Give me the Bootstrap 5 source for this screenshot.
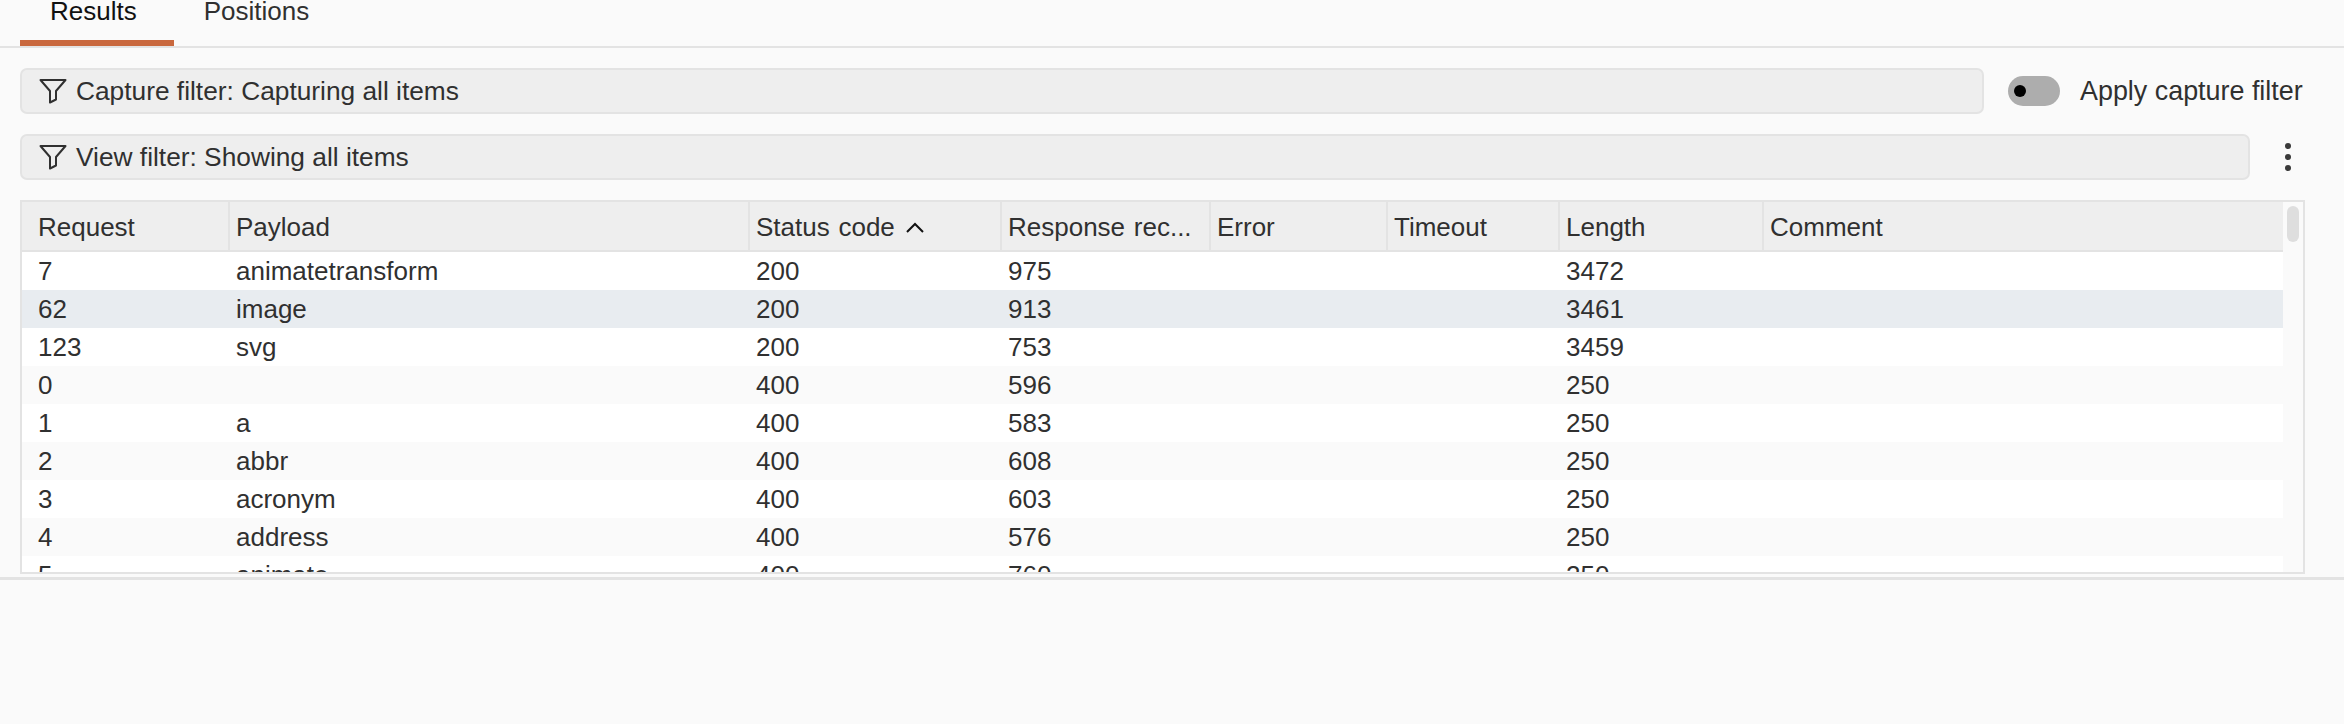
<!DOCTYPE html>
<html lang="en">
<head>
<meta charset="utf-8">
<title>Results</title>
<link href="https://cdn.jsdelivr.net/npm/bootstrap@5.3.0/dist/css/bootstrap.min.css" rel="stylesheet">
<style>
html,body{height:100%;margin:0;overflow:hidden}
body{background:#fafafa;color:#303030;font-family:"Liberation Sans",Arial,sans-serif;font-size:26px;line-height:1.2}
.top-tabs{height:48px;border-bottom:2px solid #e3e3e3;padding-left:20px;flex-wrap:nowrap}
.top-tabs .nav-link{height:46px;padding:0 36px 0 30px;line-height:22px;color:#303030;border-radius:0;border-bottom:6px solid transparent;background:none}
.top-tabs .nav-item:first-child .nav-link{padding-right:37px}
.top-tabs .nav-link.active{color:#111;border-bottom-color:#c9683e}
.panel-main{padding:20px 39px 0 20px;height:529px}
.filter-box{height:46px;background:#eee;border:2px solid #e3e3e3;border-radius:7px;padding-left:17px;gap:9px;line-height:42px;min-width:0;font-size:26.3px}
.filter-icon{width:28px;height:26px;flex:none}
.capture-box{width:1964px}
.view-box{width:2230px}
.toggle-off{width:52px;height:30px;border-radius:15px;background:#adadad;position:relative;flex:none;margin-left:24px}
.toggle-off::before{content:"";position:absolute;left:6px;top:9px;width:12px;height:12px;border-radius:50%;background:#000}
.toggle-label{margin-left:20px;white-space:nowrap;font-size:26.9px}
.kebab{width:6px;margin-left:35px;gap:5px}
.kebab span{width:6px;height:6px;border-radius:50%;background:#3a3a3a}
.mt-filter{margin-top:20px}
.results-frame{height:374px;border:2px solid #e3e3e3;width:2285px}
.results-clip{width:2263px;height:370px;overflow:hidden;background:#fff}
.table.results-table{table-layout:fixed;width:2263px;margin:0;border-collapse:separate;border-spacing:0;color:#303030}
.table.results-table>*>*>*{padding:0 0 0 6px;border:0;box-shadow:none;background:transparent;white-space:nowrap;overflow:hidden;font-weight:400;color:inherit;vertical-align:middle;line-height:30px}
.table.results-table>*>*>:first-child{padding-left:16px}
.results-table thead tr{height:50px}
.table.results-table thead th{background:#eee;border-right:2px solid #e3e3e3;border-bottom:2px solid #e3e3e3;padding-top:2px;word-spacing:1.500px}
.table.results-table thead th:last-child{border-right:0}
.results-table tbody tr{height:38px}
.results-table tbody tr.is-odd{background:#fafafa}
.results-table tbody tr.is-sel{background:#e8ecf0}
.sort-up{width:18px;height:11px;margin-left:11px;vertical-align:3px}
.scroll-track{width:20px;background:#fafafa;padding:4px 4px 0 4px}
.scroll-thumb{width:12px;height:36px;border-radius:6px;background:#dedede}
.lower-pane{border-top:3px solid #e3e3e3;height:147px}
</style>
</head>
<body>
<ul class="nav top-tabs">
  <li class="nav-item"><a class="nav-link active" href="#">Results</a></li>
  <li class="nav-item"><a class="nav-link" href="#">Positions</a></li>
</ul>
<div class="panel-main d-flex flex-column">
  <div class="d-flex align-items-center">
    <div class="filter-box capture-box d-flex align-items-center">
      <svg class="filter-icon" viewBox="0 0 28 26" fill="none" stroke="#303030" stroke-width="2" stroke-linejoin="round"><path d="M1.500 2h25L17 13v8.500L11 24.500V13z"/></svg>
      <span>Capture filter: Capturing all items</span>
    </div>
    <span class="toggle-off"></span>
    <span class="toggle-label">Apply capture filter</span>
  </div>
  <div class="d-flex align-items-center mt-filter">
    <div class="filter-box view-box d-flex align-items-center">
      <svg class="filter-icon" viewBox="0 0 28 26" fill="none" stroke="#303030" stroke-width="2" stroke-linejoin="round"><path d="M1.500 2h25L17 13v8.500L11 24.500V13z"/></svg>
      <span>View filter: Showing all items</span>
    </div>
    <div class="kebab d-flex flex-column"><span></span><span></span><span></span></div>
  </div>
  <div class="results-frame d-flex mt-filter">
    <div class="results-clip">
      <table class="table results-table">
        <colgroup><col style="width:208px"><col style="width:520px"><col style="width:252px"><col style="width:209px"><col style="width:177px"><col style="width:172px"><col style="width:204px"><col></colgroup>
        <thead><tr><th>Request</th><th>Payload</th><th>Status code<svg class="sort-up" viewBox="0 0 18 11" fill="none" stroke="#111" stroke-width="2"><path d="M1 10l8-8 8 8"/></svg></th><th>Response rec...</th><th>Error</th><th>Timeout</th><th>Length</th><th>Comment</th></tr></thead>
        <tbody>
          <tr><td>7</td><td>animatetransform</td><td>200</td><td>975</td><td></td><td></td><td>3472</td><td></td></tr>
          <tr class="is-sel"><td>62</td><td>image</td><td>200</td><td>913</td><td></td><td></td><td>3461</td><td></td></tr>
          <tr><td>123</td><td>svg</td><td>200</td><td>753</td><td></td><td></td><td>3459</td><td></td></tr>
          <tr class="is-odd"><td>0</td><td></td><td>400</td><td>596</td><td></td><td></td><td>250</td><td></td></tr>
          <tr><td>1</td><td>a</td><td>400</td><td>583</td><td></td><td></td><td>250</td><td></td></tr>
          <tr class="is-odd"><td>2</td><td>abbr</td><td>400</td><td>608</td><td></td><td></td><td>250</td><td></td></tr>
          <tr><td>3</td><td>acronym</td><td>400</td><td>603</td><td></td><td></td><td>250</td><td></td></tr>
          <tr class="is-odd"><td>4</td><td>address</td><td>400</td><td>576</td><td></td><td></td><td>250</td><td></td></tr>
          <tr><td>5</td><td>animate</td><td>400</td><td>760</td><td></td><td></td><td>250</td><td></td></tr>
        </tbody>
      </table>
    </div>
    <div class="scroll-track"><div class="scroll-thumb"></div></div>
  </div>
</div>
<div class="lower-pane"></div>
</body>
</html>
